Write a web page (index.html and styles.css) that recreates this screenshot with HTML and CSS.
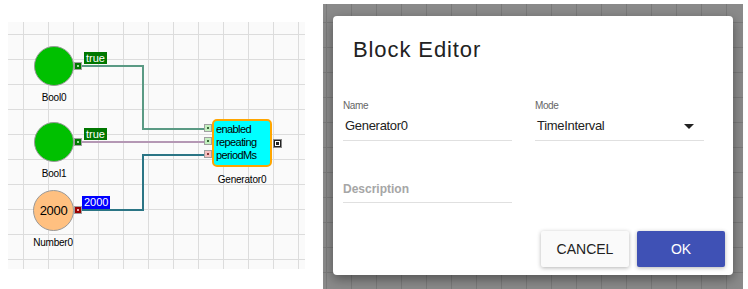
FILE: index.html
```html
<!DOCTYPE html>
<html lang="en">

<head>
    <meta charset="UTF-8">
    <meta name="viewport" content="width=device-width, initial-scale=1.0">
    <title>Block Editor</title>
    <link rel="stylesheet" href="styles.css">
</head>

<body>
    <div class="page">
        <div class="left">
            <div class="canvas">
                <svg class="wires" width="297" height="247">
                    <polyline points="74,44 135,44 135,107 196,107" class="wire w-enabled" />
                    <polyline points="74,120 196,120" class="wire w-repeating" />
                    <polyline points="74,188 135,188 135,133 196,133" class="wire w-period" />
                </svg>

                <div class="node" style="left:26px;top:24px">
                    <div class="ball bool"></div>
                    <span class="port out-bool"></span>
                    <span class="tag tag-bool">true</span>
                    <div class="caption">Bool0</div>
                </div>

                <div class="node" style="left:26px;top:100px">
                    <div class="ball bool"></div>
                    <span class="port out-bool"></span>
                    <span class="tag tag-bool">true</span>
                    <div class="caption">Bool1</div>
                </div>

                <div class="node" style="left:25px;top:168px">
                    <div class="ball number">2000</div>
                    <span class="port out-number"></span>
                    <span class="tag tag-number">2000</span>
                    <div class="caption">Number0</div>
                </div>

                <div class="block" style="left:204px;top:97px">
                    <div class="block-body">
                        <div class="input"><span class="port in-bool"></span>enabled</div>
                        <div class="input"><span class="port in-bool"></span>repeating</div>
                        <div class="input"><span class="port in-number"></span>periodMs</div>
                    </div>
                    <span class="port out-event"></span>
                    <div class="caption">Generator0</div>
                </div>
            </div>
        </div>

        <div class="right">
            <div class="dialog">
                <h2 class="dialog-title">Block Editor</h2>
                <div class="fields">
                    <div class="field">
                        <label>Name</label>
                        <div class="value">Generator0</div>
                    </div>
                    <div class="field">
                        <label>Mode</label>
                        <div class="value select">TimeInterval <span class="arrow"></span></div>
                    </div>
                </div>
                <div class="fields">
                    <div class="field">
                        <div class="value placeholder">Description</div>
                    </div>
                </div>
                <div class="actions">
                    <button class="btn cancel">CANCEL</button>
                    <button class="btn ok">OK</button>
                </div>
            </div>
        </div>
    </div>
</body>

</html>
```

FILE: styles.css
```css
body {
    margin: 0;
    background: white;
    font-family: "Liberation Sans", Arial, sans-serif;
}

.page {
    display: flex;
    height: 289px;
    overflow: hidden;
}

.left {
    width: 323px;
    padding: 22px 0 0 8px;
    box-sizing: border-box;
}

.canvas {
    position: relative;
    width: 297px;
    height: 247px;
    background-color: #fafafa;
    background-image:
        linear-gradient(to right, #dcdcdc 1px, transparent 1px),
        linear-gradient(to bottom, #dcdcdc 1px, transparent 1px);
    background-size: 25px 25px;
    background-position: 15px 12px;
    font-size: 10px;
}

.wires {
    position: absolute;
    left: 0;
    top: 0;
}

.wire {
    fill: none;
    stroke-width: 2;
}

.w-enabled {
    stroke: #5a9a84;
}

.w-repeating {
    stroke: #b497b4;
}

.w-period {
    stroke: #2b7585;
}

.node {
    position: absolute;
    width: 40px;
}

.ball {
    width: 40px;
    height: 40px;
    border-radius: 50%;
    box-sizing: border-box;
    border: 1px solid #999;
}

.ball.bool {
    background: #00c000;
}

.ball.number {
    width: 41px;
    height: 41px;
    background: #ffc080;
    display: flex;
    align-items: center;
    justify-content: center;
    font-size: 13px;
    letter-spacing: -0.3px;
}

.caption {
    margin-top: 6px;
    text-align: center;
    line-height: 12px;
    white-space: nowrap;
    margin-left: -20px;
    margin-right: -20px;
    letter-spacing: -0.2px;
}

.port {
    position: absolute;
    width: 8px;
    height: 8px;
    box-sizing: border-box;
    border: 1px solid #a0a0a0;
}

.port::after {
    content: "";
    position: absolute;
    left: 2px;
    top: 2px;
    width: 2px;
    height: 2px;
}

.out-bool {
    left: 40px;
    top: 16px;
    background: #007700;
}

.out-bool::after {
    background: #9fdc9f;
}

.out-number {
    left: 41px;
    top: 16px;
    background: #990000;
}

.out-number::after {
    background: #f0b0b0;
}

.tag {
    position: absolute;
    left: 50px;
    top: 6px;
    height: 12px;
    line-height: 12px;
    padding: 0 2px;
    color: white;
    font-size: 11px;
}

.tag-bool {
    background: #007700;
}

.tag-number {
    background: #0000ff;
    height: 13px;
    left: 49px;
}

.block {
    position: absolute;
    width: 60px;
}

.block-body {
    height: 48px;
    box-sizing: border-box;
    border: 2px solid #ffa500;
    border-radius: 5px;
    background: #00ffff;
    padding: 2px 0 0 2px;
}

.input {
    position: relative;
    height: 13px;
    line-height: 13px;
    font-size: 11px;
    letter-spacing: -0.6px;
}

.input .port {
    left: -12px;
    top: 1px;
}

.in-bool {
    background: #c4f0c0;
}

.in-bool::after {
    background: #3a6a3a;
}

.in-number {
    background: #f4c0c0;
}

.in-number::after {
    background: #8a3a3a;
}

.out-event {
    left: 61px;
    top: 20px;
    width: 9px;
    height: 9px;
    background: #222;
    border: 1px solid #888;
}

.out-event::after {
    left: 1px;
    top: 1px;
    width: 3px;
    height: 3px;
    border: 1px solid white;
    box-sizing: content-box;
}

.block .caption {
    margin-top: 7px;
}

.right {
    width: 420px;
    margin-top: 4px;
    padding: 12px 0 0 10px;
    box-sizing: border-box;
    background-color: #8a8a8a;
    background-image:
        linear-gradient(to right, #7a7a7a 1px, transparent 1px),
        linear-gradient(to bottom, #7a7a7a 1px, transparent 1px);
    background-size: 25px 25px;
    background-position: 3px 18px;
}

.dialog {
    width: 400px;
    height: 259px;
    box-sizing: border-box;
    background: white;
    border-radius: 4px;
    box-shadow: 0 4px 12px rgba(0, 0, 0, 0.4);
    padding: 20px 8px 8px 10px;
    display: flex;
    flex-direction: column;
}

.dialog-title {
    margin: 0 0 0 10px;
    font-size: 22px;
    line-height: 28px;
    font-weight: 400;
    letter-spacing: 0.9px;
    color: #222;
}

.fields {
    display: flex;
    gap: 23px;
}

.dialog-title + .fields {
    margin-top: 36px;
}

.fields + .fields {
    margin-top: 38px;
}

.field {
    width: 169px;
    border-bottom: 1px solid #e0e0e0;
}

.field label {
    display: block;
    font-size: 10px;
    line-height: 12px;
    letter-spacing: -0.4px;
    color: #666;
}

.value {
    font-size: 13px;
    line-height: 20px;
    letter-spacing: -0.3px;
    padding: 4px 2px;
    color: #222;
}

.select {
    display: flex;
    justify-content: space-between;
    align-items: center;
}

.arrow {
    width: 0;
    height: 0;
    border-left: 5px solid transparent;
    border-right: 5px solid transparent;
    border-top: 5px solid #222;
    margin-right: 8px;
}

.placeholder {
    color: #a6a6a6;
    font-size: 12px;
    font-weight: 700;
    letter-spacing: 0;
    padding: 0 0 3px 0;
}

.actions {
    margin-top: auto;
    display: flex;
    justify-content: flex-end;
    gap: 8px;
}

.btn {
    width: 88px;
    height: 36px;
    border: none;
    border-radius: 2px;
    font-family: "Liberation Sans", Arial, sans-serif;
    font-size: 14px;
}

.cancel {
    background: #fafafa;
    color: #222;
    box-shadow: 0 1px 4px rgba(0, 0, 0, 0.3);
}

.ok {
    background: #3f51b5;
    color: white;
    box-shadow: 0 1px 4px rgba(0, 0, 0, 0.3);
}
```
